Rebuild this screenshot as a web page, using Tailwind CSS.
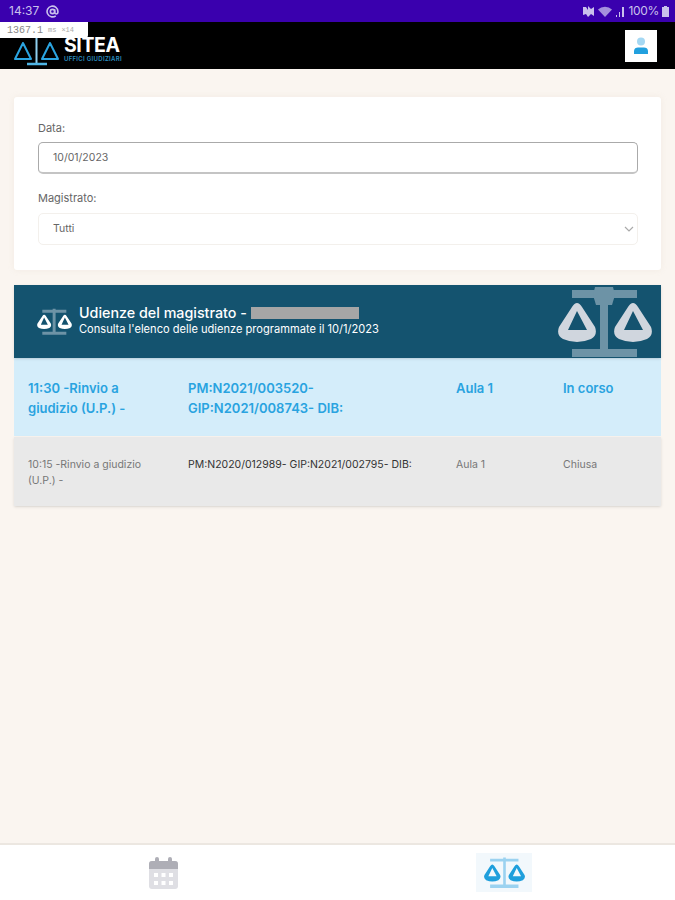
<!DOCTYPE html>
<html lang="it">
<head>
  <meta charset="UTF-8" />
  <meta name="viewport" content="width=device-width, initial-scale=1.0" />
  <title>SITEA</title>
  <script src="https://cdn.jsdelivr.net/npm/@tailwindcss/browser@4"></script>
</head>
<body class="relative h-[900px] w-[675px] overflow-hidden bg-[#faf5f0] font-['Inter',sans-serif] text-[#555]">

  <!-- Status bar -->
  <div class="flex h-[22px] items-center justify-between bg-[#3a00ae] pl-[9px] pr-[6px] text-[12px] text-[#c9c0ec]">
    <div class="flex items-center gap-[7px]">
      <span>14:37</span>
      <svg width="13" height="13" viewBox="0 0 24 24" fill="none" stroke="currentColor" stroke-width="3"><circle cx="12" cy="12" r="4"/><path d="M16 8v5.500a3 3 0 0 0 6 0V12a10 10 0 1 0-4 8"/></svg>
    </div>
    <div class="flex items-center gap-[3px]">
      <svg width="13" height="11" viewBox="0 0 13 11" fill="currentColor"><path d="M1 1l3 0 2 3 0-4 3 3 3-2v9l-3-2-3 3-2-3-3 1z"/></svg>
      <svg width="14" height="11" viewBox="0 0 14 11" fill="currentColor"><path d="M0 3.500a10 10 0 0 1 14 0L7 11z" opacity=".75"/></svg>
      <svg width="10" height="11" viewBox="0 0 10 11" fill="currentColor"><path d="M1 9h1v2H1zM4 6h1v5H4zM7 1h2v10H7z"/></svg>
      <span class="tracking-[-0.3px]">100%</span>
      <svg width="7" height="11" viewBox="0 0 7 11" fill="currentColor"><path d="M2 0h3v1h2v10H0V1h2z"/></svg>
    </div>
  </div>

  <!-- Perf overlay -->
  <div class="absolute left-0 top-[22px] z-10 flex h-[16px] w-[88px] items-center gap-[5px] rounded-br-[3px] bg-white pl-[7px] font-['Liberation_Mono',monospace] text-[9px] text-[#888]">
    <span class="text-[10px]">1367.1</span><span class="text-[7px] text-[#aaa]">ms</span><span class="text-[7px] text-[#aaa]">×14</span>
  </div>

  <!-- Header -->
  <header class="flex h-[47px] items-center justify-between bg-black pl-[13px] pr-[18px]">
    <div class="flex items-start pt-[11px]">
      <svg width="48" height="38" viewBox="0 0 48 38" fill="none" class="-mt-[7px] mr-[3px]">
        <path d="M23.500 6v28" stroke="#8fd0f0" stroke-width="2"/>
        <path d="M14 35h20" stroke="#4fb4e4" stroke-width="2.500"/>
        <path d="M10 14L2 30h16zM37 14l-8 16h16z" stroke="#2ba4e0" stroke-width="2" stroke-linejoin="round"/>
      </svg>
      <div class="flex flex-col">
        <span class="text-[19.500px] font-bold leading-[19px] tracking-[-0.4px] text-white">SITEA</span>
        <span class="mt-[1px] text-[6px] font-semibold leading-[6px] tracking-[0.3px] text-[#2b8fc0]">UFFICI GIUDIZIARI</span>
      </div>
    </div>
    <div class="flex h-[32px] w-[32px] items-center justify-center bg-white">
      <svg width="14" height="17" viewBox="0 0 14 17">
        <circle cx="7" cy="4.500" r="4" fill="#a5d8f3"/>
        <path d="M0 17v-3C0 11.500 2 10.500 4 10.500h6c2 0 4 1 4 3.500v3z" fill="#22a0de"/>
      </svg>
    </div>
  </header>

  <main class="px-[14px] pt-[28px]">
    <!-- Filters -->
    <section class="h-[173px] rounded-[3px] bg-white pl-[24px] pr-[23px] pt-[25px] shadow-[0_0_6px_rgba(200,180,160,0.15)]">
      <label class="block text-[11px] leading-[13px] text-[#666]">Data:</label>
      <div class="mt-[7px] flex h-[32px] items-center rounded-[5px] border border-[#aaa] border-b-2 border-b-[#c4c4c4] pl-[14px] text-[10.500px] text-[#666]">10/01/2023</div>
      <label class="mt-[18px] block text-[11px] leading-[13px] text-[#666]">Magistrato:</label>
      <div class="mt-[8px] flex h-[32px] items-center justify-between rounded-[5px] border border-[#f3f0ec] pl-[14px] pr-[3px] text-[10.500px] text-[#666]">
        <span>Tutti</span>
        <svg width="10" height="10" viewBox="0 0 10 10" fill="none" stroke="#aaa" stroke-width="1.200"><path d="M1 3l4 4 4-4"/></svg>
      </div>
    </section>

    <!-- Banner -->
    <section class="relative mt-[15px] flex h-[73px] items-center overflow-hidden bg-[#14536f] pl-[23px] shadow-sm">
      <svg width="35" height="27" viewBox="0 0 94 73" class="shrink-0">
        <path d="M14 5h65v8H14zM42 2h8v66h-8zM14 64h65v8H14z" fill="#6d93a6"/>
        <path fill-rule="evenodd" d="M14 22Q19 14 24 22L37 42Q40 50 33 54Q19 60 5 54Q-2 50 1 42zM19 26L10 45H29zM70 22Q75 14 80 22L93 42Q96 50 89 54Q75 60 61 54Q54 50 57 42zM75 26L66 45H85z" fill="#fff"/>
      </svg>
      <div class="ml-[7px] pb-[2px] text-white">
        <div class="flex items-center text-[14.300px] font-medium leading-[18px]">
          <span>Udienze del magistrato -</span>
          <span class="ml-[4px] h-[12px] w-[108px] bg-[#a6a6a6]"></span>
        </div>
        <div class="text-[11.100px] leading-[15px]">Consulta l'elenco delle udienze programmate il 10/1/2023</div>
      </div>
      <svg width="94" height="73" viewBox="0 0 94 73" class="absolute right-[9px] top-0">
        <path d="M14 5h65v8H14zM42 10h8v56h-8zM14 64h65v8H14z" fill="#6d93a6"/>
        <path d="M37 2h18l2 8-3 10h-16l-3-10z" fill="#6d93a6"/>
        <path fill-rule="evenodd" d="M14 22Q19 14 24 22L37 42Q40 50 33 54Q19 60 5 54Q-2 50 1 42zM19 26L10 45H29zM70 22Q75 14 80 22L93 42Q96 50 89 54Q75 60 61 54Q54 50 57 42zM75 26L66 45H85z" fill="#d0d6de"/>
      </svg>
    </section>

    <!-- Hearings -->
    <div class="grid h-[78px] grid-cols-[160px_268px_107px_1fr] bg-[#d4edfa] pl-[14px] pt-[20px] text-[13px] font-semibold leading-[20px] text-[#29a3e0]">
      <div class="pr-[40px]">11:30 -Rinvio a giudizio (U.P.) -</div>
      <div class="pr-[70px]">PM:N2021/003520- GIP:N2021/008743- DIB:</div>
      <div>Aula 1</div>
      <div>In corso</div>
    </div>
    <div class="mt-[1px] grid h-[69px] grid-cols-[160px_268px_107px_1fr] bg-[#e9e9e9] pl-[14px] pt-[20px] text-[10.500px] leading-[16px] text-[#777] shadow-sm">
      <div class="pr-[25px]">10:15 -Rinvio a giudizio (U.P.) -</div>
      <div class="text-[#333]">PM:N2020/012989- GIP:N2021/002795- DIB:</div>
      <div>Aula 1</div>
      <div>Chiusa</div>
    </div>
  </main>

  <!-- Bottom nav -->
  <nav class="absolute bottom-0 left-0 flex h-[57px] w-full justify-between border-t-2 border-[#ece7e1] bg-white pl-[149px] pr-[143px] pt-[8px]">
    <svg width="29" height="32" viewBox="0 0 29 32" class="mt-[4px]">
      <rect x="0" y="4" width="29" height="28" rx="3" fill="#dfdfe4"/>
      <path d="M0 12V7a3 3 0 0 1 3-3h23a3 3 0 0 1 3 3v5z" fill="#aeaeb6"/>
      <rect x="6" y="0" width="4" height="8" rx="2" fill="#aeaeb6"/>
      <rect x="19" y="0" width="4" height="8" rx="2" fill="#aeaeb6"/>
      <path d="M5 16h4v4H5zM12.500 16h4v4h-4zM20 16h4v4h-4zM5 24h4v4H5zM12.500 24h4v4h-4zM20 24h4v4h-4z" fill="#fff"/>
    </svg>
    <div class="flex h-[39px] w-[56px] items-center justify-center bg-[#f2f8fc]">
      <svg width="41" height="33" viewBox="0 0 94 73">
        <path d="M14 5h65v6H14zM44 2h6v66h-6zM14 64h65v8H14z" fill="#9bd2f0"/>
        <path fill-rule="evenodd" d="M14 22Q19 14 24 22L37 42Q40 50 33 54Q19 60 5 54Q-2 50 1 42zM19 26L10 45H29zM70 22Q75 14 80 22L93 42Q96 50 89 54Q75 60 61 54Q54 50 57 42zM75 26L66 45H85z" fill="#1f9fdc"/>
      </svg>
    </div>
  </nav>
</body>
</html>
